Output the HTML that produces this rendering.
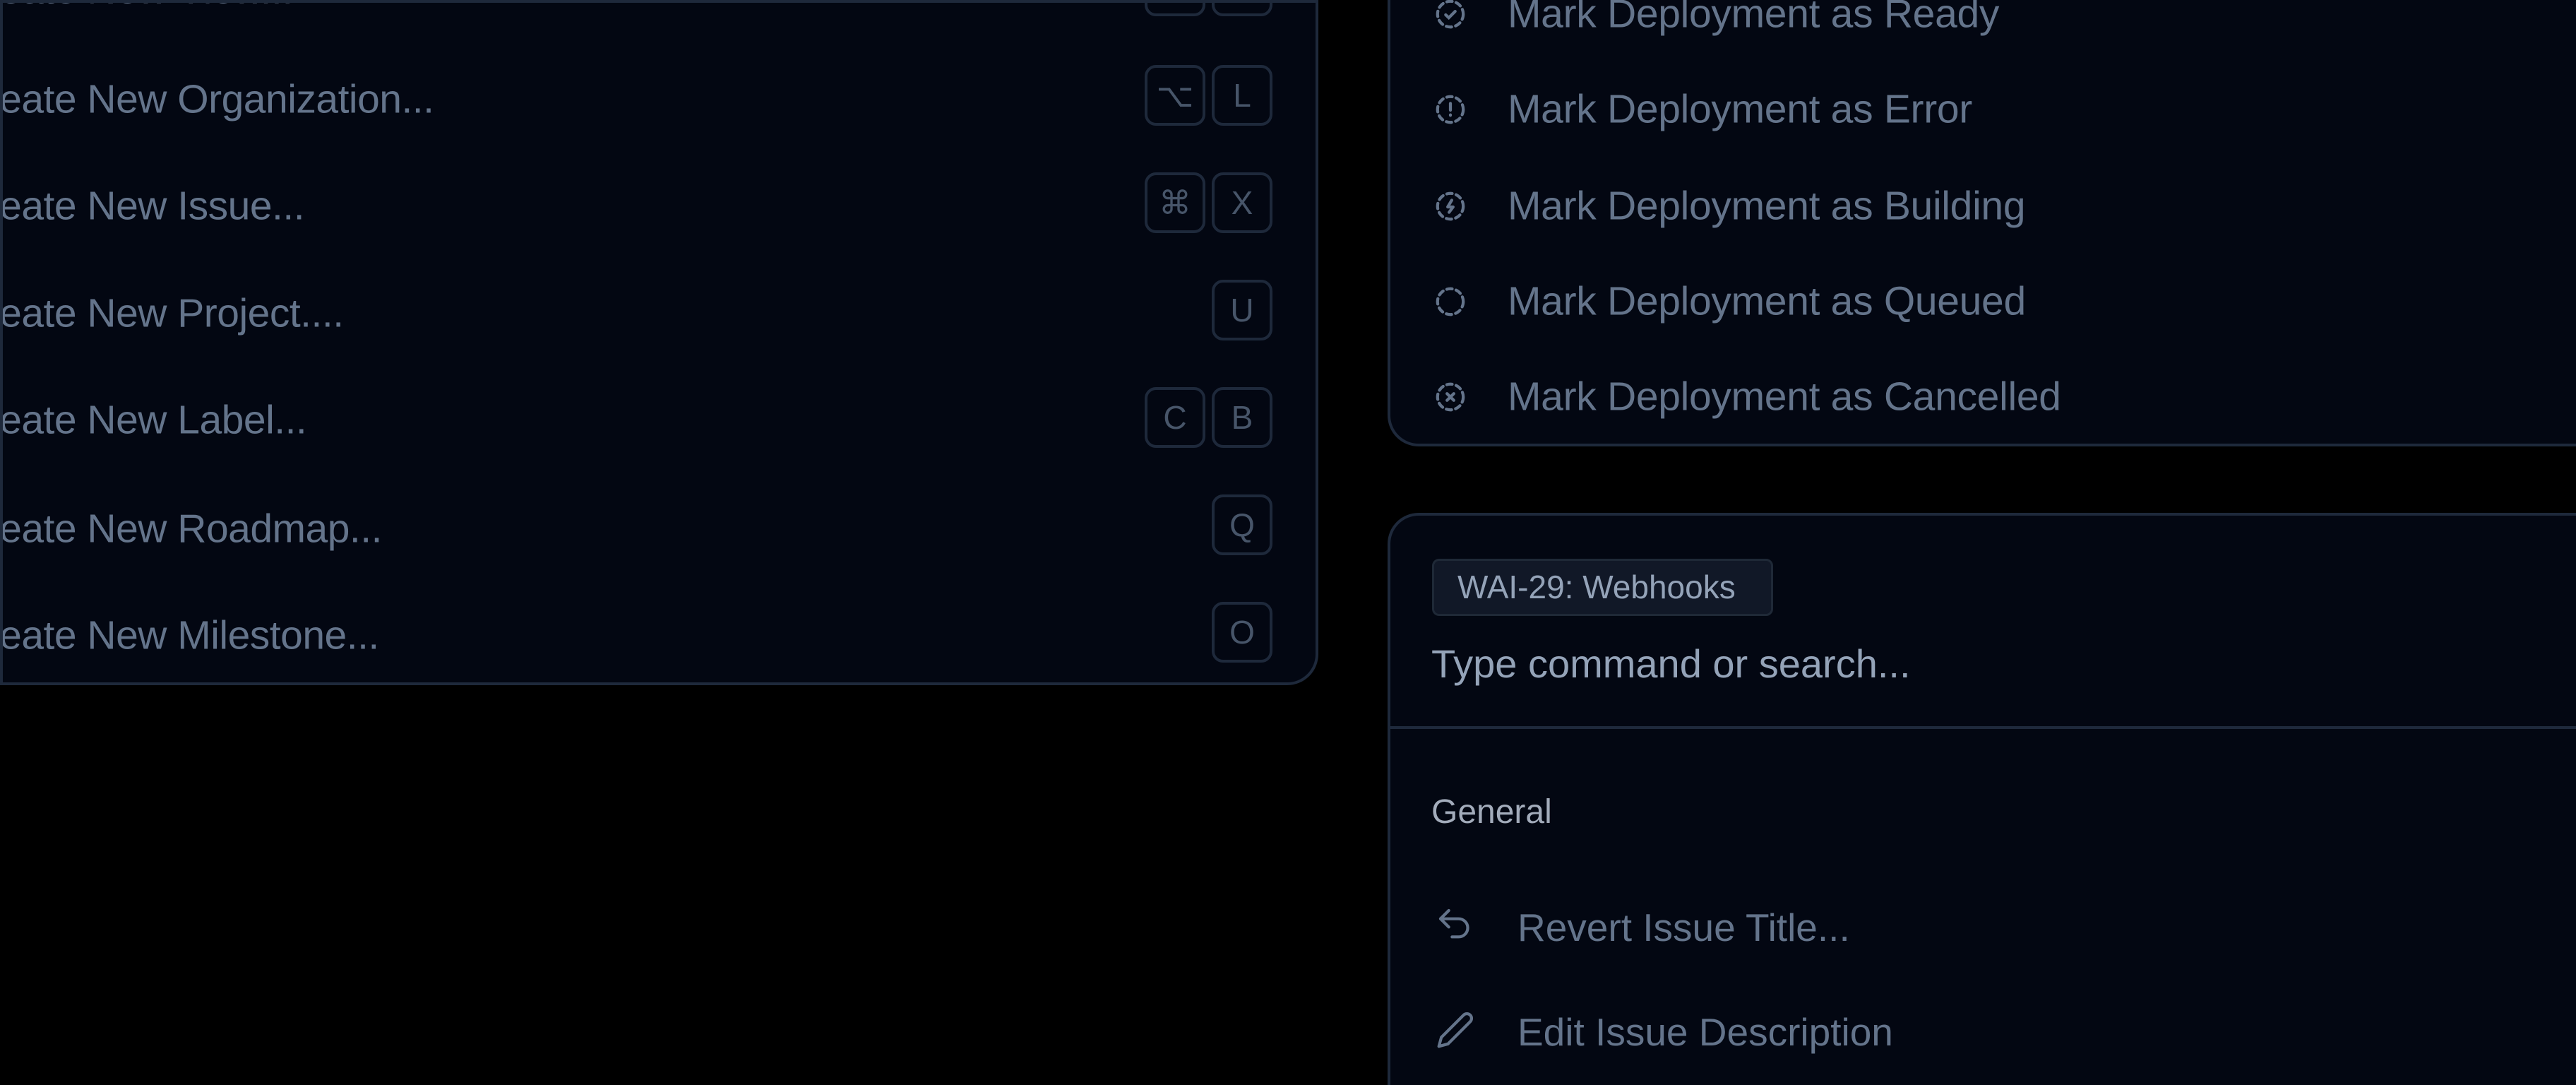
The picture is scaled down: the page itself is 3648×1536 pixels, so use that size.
<!DOCTYPE html>
<html><head><meta charset="utf-8"><style>
html,body{margin:0;padding:0;background:#000;overflow:hidden;}
body{width:3648px;height:1536px;position:relative;overflow:hidden;font-family:"Liberation Sans",sans-serif;}
.panel{position:absolute;background:#030712;border:4px solid #1e293b;box-sizing:border-box;overflow:hidden;}
.t{position:absolute;white-space:nowrap;line-height:1;}
.lt{font-size:57px;color:#64748b;letter-spacing:-0.5px;left:-64px;transform:translateY(-50%);}
.key{position:absolute;width:86px;height:86px;box-sizing:border-box;border:4px solid #1e293b;border-radius:16px;color:#475569;font-size:46px;display:flex;align-items:center;justify-content:center;}
.rt{font-size:57px;color:#64748b;letter-spacing:-0.3px;left:166px;transform:translateY(-50%);}
.ic{position:absolute;left:62px;width:46px;height:46px;transform:translateY(-50%);}
</style></head><body>

<div class="panel" style="left:0;top:0;width:1867px;height:970px;border-radius:0 0 44px 0;">
  <div class="t lt" style="top:-18px;">Create New View...</div>
  <div class="key" style="left:1617px;top:-67px;"></div><div class="key" style="left:1712px;top:-67px;"></div>

  <div class="t lt" style="top:137px;">Create New Organization...</div>
  <div class="key" style="left:1617px;top:88px;">⌥</div><div class="key" style="left:1712px;top:88px;">L</div>

  <div class="t lt" style="top:288px;">Create New Issue...</div>
  <div class="key" style="left:1617px;top:240px;">⌘</div><div class="key" style="left:1712px;top:240px;">X</div>

  <div class="t lt" style="top:440px;">Create New Project....</div>
  <div class="key" style="left:1712px;top:392px;">U</div>

  <div class="t lt" style="top:591px;">Create New Label...</div>
  <div class="key" style="left:1617px;top:544px;">C</div><div class="key" style="left:1712px;top:544px;">B</div>

  <div class="t lt" style="top:745px;">Create New Roadmap...</div>
  <div class="key" style="left:1712px;top:696px;">Q</div>

  <div class="t lt" style="top:896px;">Create New Milestone...</div>
  <div class="key" style="left:1712px;top:848px;">O</div>
</div>

<div class="panel" style="left:1965px;top:-40px;width:1720px;height:672px;border-radius:0 0 0 44px;">
  <svg class="ic" style="top:56px" viewBox="0 0 24 24" fill="none" stroke="#64748b" stroke-width="2.2" stroke-linecap="round"><circle cx="12" cy="12" r="9.5" stroke-dasharray="4 3"/><path d="M8.5 12.5l2.3 2.2 4.7-4.7"/></svg>
  <div class="t rt" style="top:56px;">Mark Deployment as Ready</div>
  <svg class="ic" style="top:191px" viewBox="0 0 24 24" fill="none" stroke="#64748b" stroke-width="2.2" stroke-linecap="round"><circle cx="12" cy="12" r="9.5" stroke-dasharray="4 3"/><path d="M12 7.5v5M12 16v.3"/></svg>
  <div class="t rt" style="top:191px;">Mark Deployment as Error</div>
  <svg class="ic" style="top:328px" viewBox="0 0 24 24" fill="none" stroke="#64748b" stroke-width="2.2" stroke-linecap="round" stroke-linejoin="round"><circle cx="12" cy="12" r="9.5" stroke-dasharray="4 3"/><path d="M13 7.5l-3 5h4l-3 4"/></svg>
  <div class="t rt" style="top:328px;">Mark Deployment as Building</div>
  <svg class="ic" style="top:463px" viewBox="0 0 24 24" fill="none" stroke="#64748b" stroke-width="2.2" stroke-linecap="round"><circle cx="12" cy="12" r="9.5" stroke-dasharray="4 3"/></svg>
  <div class="t rt" style="top:463px;">Mark Deployment as Queued</div>
  <svg class="ic" style="top:598px" viewBox="0 0 24 24" fill="none" stroke="#64748b" stroke-width="2.2" stroke-linecap="round"><circle cx="12" cy="12" r="9.5" stroke-dasharray="4 3"/><path d="M9.5 9.5l5 5M14.5 9.5l-5 5"/></svg>
  <div class="t rt" style="top:598px;">Mark Deployment as Cancelled</div>
</div>

<div class="panel" style="left:1965px;top:726px;width:1683px;height:810px;border-radius:44px 0 0 0;border-right:none;border-bottom:none;">
  <div style="position:absolute;left:59px;top:61px;width:483px;height:81px;box-sizing:border-box;background:#111827;border:3px solid #1f2937;border-radius:10px;color:#94a3b8;font-size:46px;line-height:75px;padding-left:33px;white-space:nowrap;">WAI-29: Webhooks</div>
  <div class="t" style="left:58px;top:182px;font-size:56px;color:#94a3b8;">Type command or search...</div>
  <div style="position:absolute;left:0;right:0;top:298px;height:4px;background:#1e293b;"></div>
  <div class="t" style="left:58px;top:396px;font-size:48px;color:#a3acbb;">General</div>
  <svg style="position:absolute;left:64px;top:552px;width:56px;height:56px;" viewBox="0 0 24 24" fill="none" stroke="#64748b" stroke-width="1.8" stroke-linecap="round" stroke-linejoin="round"><path d="M8 3L3 8l5 5"/><path d="M3 8h11a5.5 5.5 0 0 1 0 11h-4"/></svg>
  <div class="t" style="left:180px;top:556px;font-size:55px;color:#64748b;">Revert Issue Title...</div>
  <svg style="position:absolute;left:64px;top:700px;width:56px;height:56px;" viewBox="0 0 24 24" fill="none" stroke="#64748b" stroke-width="1.8" stroke-linecap="round" stroke-linejoin="round"><path d="M17 3a2.8 2.8 0 0 1 4 4L7.5 20.5 2 22l1.5-5.5z"/></svg>
  <div class="t" style="left:180px;top:704px;font-size:55px;color:#64748b;">Edit Issue Description</div>
</div>
</body></html>
